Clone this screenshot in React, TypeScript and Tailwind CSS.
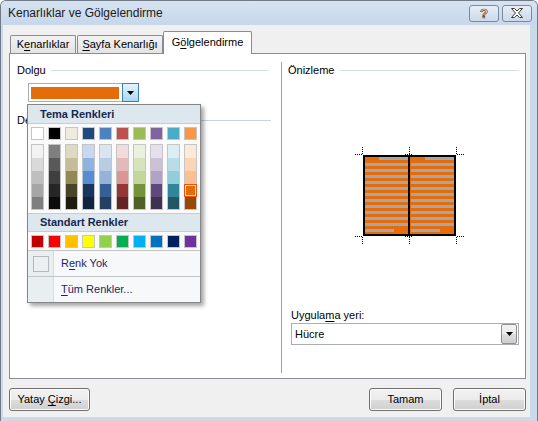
import React from "react";

const TOP = ["#FFFFFF", "#000000", "#EEECE1", "#1F497D", "#4F81BD", "#C0504D", "#9BBB59", "#8064A2", "#4BACC6", "#F79646"];
const SHADES = [
  ["#F2F2F2", "#D9D9D9", "#BFBFBF", "#A6A6A6", "#7F7F7F"],
  ["#7F7F7F", "#595959", "#3F3F3F", "#262626", "#0C0C0C"],
  ["#DDD9C3", "#C4BD97", "#938953", "#494429", "#1D1B10"],
  ["#C6D9F0", "#8DB3E2", "#548DD4", "#17365D", "#0F243E"],
  ["#DBE5F1", "#B8CCE4", "#95B3D7", "#366092", "#244061"],
  ["#F2DCDB", "#E5B9B7", "#D99694", "#953734", "#632423"],
  ["#EBF1DD", "#D7E3BC", "#C3D69B", "#76923C", "#4F6128"],
  ["#E5E0EC", "#CCC1D9", "#B2A2C7", "#5F497A", "#3F3151"],
  ["#DBEEF3", "#B7DDE8", "#92CDDC", "#31859B", "#205867"],
  ["#FDEADA", "#FBD5B5", "#FAC08F", "#E36C09", "#974806"],
];
const STD = ["#C00000", "#FF0000", "#FFC000", "#FFFF00", "#92D050", "#00B050", "#00B0F0", "#0070C0", "#002060", "#7030A0"];
const CELL_H = [13, 13, 13, 13, 12];

function Swatch({ c }: { c: string }) {
  return (
    <div className="w-[13px] h-[13px] border border-[#c5c5c5]">
      <div className="w-full h-full" style={{ backgroundColor: c }} />
    </div>
  );
}

function Btn({ w, children }: { w: string; children: React.ReactNode }) {
  return (
    <div
      className={`${w} h-[23px] rounded-[3px] border border-[#707070] bg-[linear-gradient(to_bottom,#f2f2f2_0%,#ebebeb_50%,#dddddd_50%,#cfcfcf_100%)] shadow-[inset_0_0_0_1px_#fbfbfb] flex items-center justify-center text-black`}
    >
      <span>{children}</span>
    </div>
  );
}

function Tab({ w, children }: { w: string; children: React.ReactNode }) {
  return (
    <div
      className={`${w} h-[18px] border border-b-0 border-[#898c95] rounded-t-[2px] bg-[linear-gradient(to_bottom,#f2f2f2,#e3e3e3)] flex items-center justify-center`}
    >
      <span>{children}</span>
    </div>
  );
}

function Down() {
  return (
    <svg width="7" height="4" viewBox="0 0 7 4">
      <path d="M0 0h7L3.5 4z" fill="#000" />
    </svg>
  );
}

function Preview() {
  const ys = Array.from({ length: 11 }, (_, k) => 23 + 6 * k);
  const dotsV = (x: number, y1: number, y2: number, key: string) => (
    <line key={key} x1={x + 0.5} x2={x + 0.5} y1={y1} y2={y2} stroke="#000" strokeWidth="1" strokeDasharray="1 1" />
  );
  const dotsH = (y: number, x1: number, x2: number, key: string) => (
    <line key={key} y1={y + 0.5} y2={y + 0.5} x1={x1} x2={x2} stroke="#000" strokeWidth="1" strokeDasharray="1 1" />
  );
  return (
    <svg width="120" height="110" viewBox="0 0 120 110" shapeRendering="crispEdges">
      <rect x="14" y="16" width="91" height="79" fill="#E46C0A" stroke="#000" strokeWidth="2" />
      <rect x="29" y="17" width="29" height="3" fill="#a6a6a6" />
      <rect x="75" y="17" width="29" height="3" fill="#a6a6a6" />
      {ys.map((y) => (
        <g key={y}>
          <rect x="15" y={y} width="43" height="3" fill="#a6a6a6" />
          <rect x="61" y={y} width="43" height="3" fill="#a6a6a6" />
        </g>
      ))}
      <rect x="15" y="89" width="29" height="3" fill="#a6a6a6" />
      <rect x="61" y="89" width="29" height="3" fill="#a6a6a6" />
      <rect x="58" y="15" width="2" height="81" fill="#000" />
      {dotsV(12, 7, 14, "a")}
      {dotsV(59, 7, 14, "b")}
      {dotsV(106, 7, 14, "c")}
      {dotsH(14, 5, 12, "d")}
      {dotsH(14, 55, 63, "e")}
      {dotsH(14, 107, 115, "f")}
      {dotsV(12, 97, 104, "g")}
      {dotsV(59, 97, 104, "h")}
      {dotsV(106, 97, 104, "i")}
      {dotsH(96, 5, 12, "j")}
      {dotsH(96, 55, 63, "k")}
      {dotsH(96, 107, 115, "l")}
    </svg>
  );
}

export default function App() {
  return (
    <div className="relative w-[538px] h-[421px] overflow-hidden bg-[#cbdaeb] border border-b-0 border-[#6f7a86] rounded-t-[6px] font-['Liberation_Sans',Arial,sans-serif] text-[11px] text-black flex flex-col">
      {/* title bar */}
      <div className="h-[24px] shrink-0 flex items-center pl-[7px] pr-[5px] bg-[linear-gradient(to_bottom,#d6e3f1,#c6d7ea)]">
        <span className="text-[12px] text-[#1b1b1b]">Kenarlıklar ve Gölgelendirme</span>
        <div className="ml-auto flex gap-[3px]">
          <div className="w-[30px] h-[17px] rounded-[3px] border border-[#7a8a9e] bg-[linear-gradient(to_bottom,#e6edf6,#cdd9e8)] flex items-center justify-center">
            <span className="text-[13px] font-bold leading-none text-white [-webkit-text-stroke:0.7px_#3b3b3b]">?</span>
          </div>
          <div className="w-[30px] h-[17px] rounded-[3px] border border-[#7a8a9e] bg-[linear-gradient(to_bottom,#e6edf6,#cdd9e8)] flex items-center justify-center">
            <svg width="14" height="10" viewBox="0 0 14 10">
              <path
                d="M1.5 0.5h3l2.5 2.5 2.5-2.5h3l-4 4.5 4 4.5h-3l-2.5-2.5-2.5 2.5h-3l4-4.5z"
                fill="#fff"
                stroke="#3b3b3b"
                strokeWidth="1"
                strokeLinejoin="round"
              />
            </svg>
          </div>
        </div>
      </div>

      {/* client */}
      <div className="ml-[2px] w-[527px] flex-1 mb-[4px] bg-[#f0f0f0] pl-[6px] pr-[4px] pt-[6px] flex flex-col">
        {/* tabs */}
        <div className="relative z-10 flex items-end h-[22px] pl-[1px]">
          <Tab w="w-[66px]">
            K<span className="underline underline-offset-2">e</span>narlıklar
          </Tab>
          <div className="ml-[1px]">
            <Tab w="w-[86px]">
              <span className="underline underline-offset-2">S</span>ayfa Kenarlığı
            </Tab>
          </div>
          <div className="w-[89px] h-[23px] -mb-px bg-white border border-b-0 border-[#898c95] rounded-t-[2px] flex items-center justify-center pb-[1px]">
            <span>
              G<span className="underline underline-offset-2">ö</span>lgelendirme
            </span>
          </div>
        </div>

        {/* panel */}
        <div className="h-[326px] border border-[#898c95] bg-white flex pt-[8px] pb-[5px] pl-[7px] pr-[6px]">
          {/* left column */}
          <div className="w-[254px] flex flex-col">
            <div className="h-[16px] flex items-center">
              <span>Dolgu</span>
              <div className="flex-1 ml-[5px] mr-[3px] h-px bg-[#d5dde4]" />
            </div>
            <div className="ml-[11px] mt-[5px] w-[111px] h-[19px] border border-[#a7afb8] bg-white flex items-center">
              <div className="ml-[2px] w-[88px] h-[12px] bg-[#E46C0A]" />
              <div className="ml-auto w-[17px] h-[19px] -mr-px border border-[#3c7fb1] bg-[linear-gradient(to_bottom,#e3f3fc,#a9d8f4)] flex items-center justify-center">
                <Down />
              </div>
            </div>
            <div className="mt-[10px] h-[16px] flex items-center">
              <span>Desen</span>
              <div className="flex-1 ml-[5px] h-px bg-[#cbd4dd]" />
            </div>
          </div>

          {/* separator */}
          <div className="ml-[10px] w-px bg-[#a0a0a0]" />

          {/* right column */}
          <div className="ml-[6px] w-[231px] flex flex-col">
            <div className="h-[16px] flex items-center">
              <span>Önizleme</span>
              <div className="flex-1 ml-[6px] h-px bg-[#d5dde4]" />
            </div>
            <div className="mt-[62px] ml-[62px]">
              <Preview />
            </div>
            <div className="mt-[58px] ml-[3px] h-[14px] leading-[14px]">
              Uygula<span className="underline underline-offset-2">m</span>a yeri:
            </div>
            <div className="ml-[3px] mt-px w-[228px] h-[22px] border border-[#abadb3] bg-white flex items-center pl-[3px]">
              <span>Hücre</span>
              <div className="ml-auto mr-px w-[16px] h-[20px] border border-[#8e8f8f] rounded-[2px] bg-[linear-gradient(to_bottom,#f2f2f2_0%,#ebebeb_50%,#dddddd_50%,#cfcfcf_100%)] flex items-center justify-center">
                <Down />
              </div>
            </div>
          </div>
        </div>

        {/* buttons */}
        <div className="mt-[9px] flex">
          <Btn w="w-[81px]">
            Yatay <span className="underline underline-offset-2">Ç</span>izgi...
          </Btn>
          <div className="ml-auto">
            <Btn w="w-[73px]">Tamam</Btn>
          </div>
          <div className="ml-[11px]">
            <Btn w="w-[73px]">İptal</Btn>
          </div>
        </div>
      </div>

      {/* color popup */}
      <div className="absolute left-[26px] top-[103px] z-20 w-[174px] border border-[#868686] bg-[#fafafa] shadow-[3px_3px_4px_rgba(0,0,0,0.35)] flex flex-col">
        <div className="h-[19px] bg-[#dde7ee] border-b border-[#c5ced6] flex items-center pl-[12px] font-bold text-[#15294f]">
          Tema Renkleri
        </div>
        <div className="mt-[3px] pl-[3px] flex gap-[4px]">
          {TOP.map((c) => (
            <Swatch key={c} c={c} />
          ))}
        </div>
        <div className="mt-[4px] pl-[3px] flex gap-[4px]">
          {SHADES.map((col, i) => (
            <div key={i} className="w-[13px] border border-[#c5c5c5] flex flex-col">
              {col.map((c, j) => (
                <div key={j} className="relative" style={{ height: CELL_H[j], backgroundColor: c }}>
                  {i === 9 && j === 3 && (
                    <div className="absolute -left-px -right-px top-0 bottom-0 border border-[#ef4f10] shadow-[inset_0_0_0_1px_#ffe294] bg-[#E36C09]" />
                  )}
                </div>
              ))}
            </div>
          ))}
        </div>
        <div className="mt-[3px] h-[19px] bg-[#dde7ee] border-b border-t border-[#c5ced6] flex items-center pl-[12px] font-bold text-[#15294f]">
          Standart Renkler
        </div>
        <div className="mt-[3px] pl-[3px] flex gap-[4px]">
          {STD.map((c) => (
            <Swatch key={c} c={c} />
          ))}
        </div>
        <div className="mt-[2px] h-px bg-[#c5c5c5]" />
        <div className="h-[25px] flex items-center bg-[#f7f8f9]">
          <div className="w-[26px] h-full bg-[#e9eef1] border-r border-[#d6dce1] flex items-center pl-[5px]">
            <div className="w-[16px] h-[16px] border border-[#b5b8bb] bg-[#eceff1]" />
          </div>
          <span className="ml-[7px] text-[#231f6e]">
            R<span className="underline underline-offset-2">e</span>nk Yok
          </span>
        </div>
        <div className="h-px bg-[#c5c5c5]" />
        <div className="h-[25px] flex items-center bg-[#f7f8f9]">
          <div className="w-[26px] h-full bg-[#e9eef1] border-r border-[#d6dce1]" />
          <span className="ml-[7px] text-[#231f6e]">
            <span className="underline underline-offset-2">T</span>üm Renkler...
          </span>
        </div>
      </div>
    </div>
  );
}
